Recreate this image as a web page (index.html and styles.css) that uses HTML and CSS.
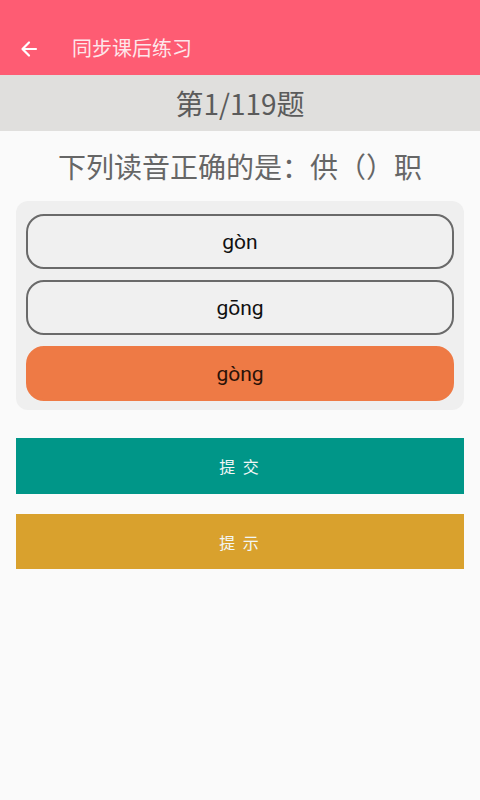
FILE: index.html
```html
<!DOCTYPE html>
<html lang="zh">
<head>
<meta charset="utf-8">
<title>同步课后练习</title>
<link rel="stylesheet" href="styles.css">
</head>
<body>
<header class="appbar">
  <div class="toolbar">
    <svg class="back" width="20" height="20" viewBox="0 0 20 20" aria-hidden="true">
      <path d="M17 10H4M10 3.5L3.5 10L10 16.5" fill="none" stroke="#fff" stroke-width="2.2" stroke-linecap="round" stroke-linejoin="round"/>
    </svg>
    <span class="title">同步课后练习</span>
  </div>
</header>
<div class="counter">第1/119题</div>
<main class="content">
  <div class="question">下列读音正确的是：供（）职</div>
  <div class="options">
    <div class="option">gòn</div>
    <div class="option">gōng</div>
    <div class="option selected">gòng</div>
  </div>
  <div class="actions">
    <div class="btn submit">提 交</div>
    <div class="btn hint">提 示</div>
  </div>
</main>
</body>
</html>
```

FILE: styles.css
```css
html, body {
  margin: 0;
  padding: 0;
}
body {
  width: 480px;
  height: 800px;
  background: #fafafa;
  font-family: "Noto Sans", Roboto, "Noto Sans CJK SC", sans-serif;
  overflow: hidden;
}
.appbar {
  background: #fe5c73;
  padding-top: 24px;
}
.toolbar {
  height: 51px;
  display: flex;
  align-items: center;
  padding-left: 19px;
  box-sizing: border-box;
}
.back {
  display: block;
  margin-top: -2px;
}
.title {
  margin-left: 33px;
  font-family: "Noto Sans CJK SC", sans-serif;
  font-size: 20px;
  color: #fde6ea;
  margin-top: -4px;
}
.counter {
  height: 56px;
  background: #e0dfdd;
  display: flex;
  align-items: center;
  justify-content: center;
  font-family: "Noto Sans CJK SC", sans-serif;
  font-size: 28px;
  color: #5b5b5b;
}
.content {
  padding: 0 16px;
}
.question {
  height: 70px;
  display: flex;
  align-items: center;
  justify-content: center;
  font-family: "Noto Sans CJK SC", sans-serif;
  font-size: 28px;
  color: #666;
}
.options {
  background: #efefef;
  border-radius: 12px;
  padding: 13px 10px 9px;
  display: flex;
  flex-direction: column;
  gap: 11px;
}
.option {
  height: 55px;
  box-sizing: border-box;
  border: 2px solid #6a6a6a;
  border-radius: 18px;
  background: #f0f0f0;
  display: flex;
  align-items: center;
  justify-content: center;
  font-family: Roboto, "Noto Sans", sans-serif;
  font-size: 21px;
  color: #111;
}
.option.selected {
  background: #ee7a45;
  border-color: #ee7a45;
  color: #2a1208;
}
.actions {
  margin-top: 28px;
  display: flex;
  flex-direction: column;
  gap: 20px;
}
.btn {
  height: 56px;
  display: flex;
  align-items: center;
  justify-content: center;
  font-family: "Noto Sans CJK SC", sans-serif;
  font-size: 16px;
  letter-spacing: 2px;
  color: #f2f7f6;
}
.submit {
  background: #009688;
}
.hint {
  background: #d9a12d;
  height: 55px;
}
```
